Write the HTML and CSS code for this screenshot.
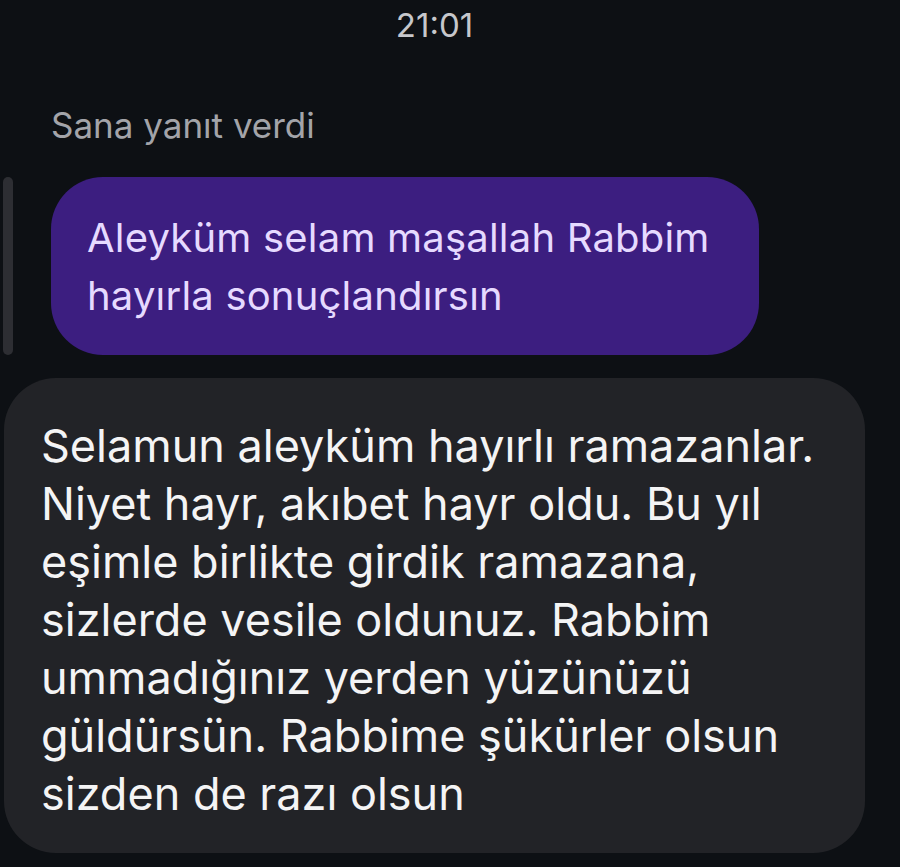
FILE: index.html
```html
<!DOCTYPE html>
<html lang="tr">
<head>
  <meta charset="UTF-8">
  <meta name="viewport" content="width=device-width, initial-scale=1.0">
  <title>Mesajlar</title>
  <link rel="stylesheet" href="styles.css">
</head>
<body>
  <div class="chat">
    <div class="time">21:01</div>
    <div class="reply-label">Sana yanıt verdi</div>
    <div class="reply">
      <div class="reply-bar"></div>
      <div class="bubble bubble-purple">Aleyküm selam maşallah Rabbim<br>hayırla sonuçlandırsın</div>
    </div>
    <div class="bubble bubble-gray">Selamun aleyküm hayırlı ramazanlar.<br>Niyet hayr, akıbet hayr oldu. Bu yıl<br>eşimle birlikte girdik ramazana,<br>sizlerde vesile oldunuz. Rabbim<br>ummadığınız yerden yüzünüzü<br>güldürsün. Rabbime şükürler olsun<br>sizden de razı olsun</div>
  </div>
</body>
</html>
```

FILE: styles.css
```css
body {
  margin: 0;
  padding: 0;
  background-color: #0d1014;
  font-family: Inter, "Noto Sans", sans-serif;
  width: 900px;
  height: 867px;
  overflow: hidden;
}

.chat {
  display: flex;
  flex-direction: column;
  padding: 0 35px 0 4px;
}

.time {
  text-align: center;
  color: #c6c7cb;
  font-size: 33px;
  line-height: 36px;
  margin-top: 7px;
}

.reply-label {
  color: #a3a4a9;
  font-size: 35px;
  line-height: 40px;
  margin-top: 62px;
  margin-left: 47px;
}

.reply {
  display: flex;
  align-items: stretch;
  gap: 38px;
  margin-top: 32px;
  margin-left: -1px;
}

.reply-bar {
  width: 10px;
  border-radius: 5px;
  background-color: #2d2e33;
}

.bubble {
  border-radius: 52px;
  white-space: nowrap;
  box-sizing: border-box;
}

.bubble-purple {
  width: 708px;
  height: 178px;
  padding: 32px 36px;
  background-color: #3c1e80;
  color: #e6daff;
  font-size: 40px;
  letter-spacing: 0.2px;
  line-height: 58px;
}

.bubble-gray {
  margin-top: 23px;
  width: 861px;
  height: 475px;
  padding: 39px 37px;
  background-color: #222327;
  color: #f4f4f5;
  font-size: 45px;
  line-height: 58px;
}
```
